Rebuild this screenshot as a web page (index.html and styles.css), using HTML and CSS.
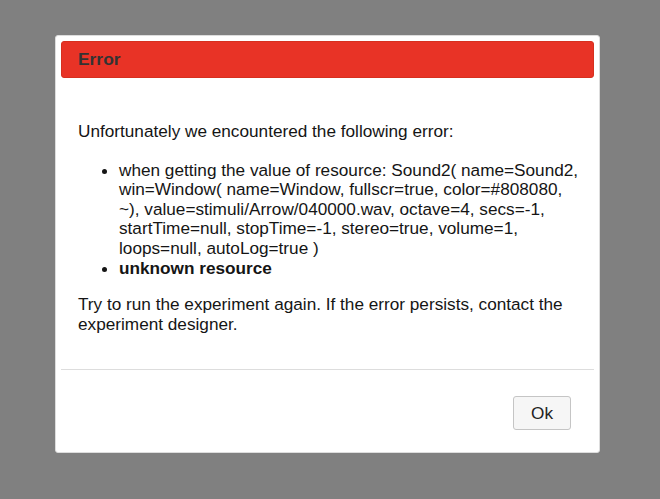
FILE: index.html
```html
<!DOCTYPE html>
<html>
<head>
<meta charset="utf-8">
<link rel="stylesheet" href="styles.css">
</head>
<body>
<div class="dialog">
  <div class="titlebar"><span class="title">Error</span></div>
  <div class="content">
    <p>Unfortunately we encountered the following error:</p>
    <ul>
      <li>when getting the value of resource: Sound2( name=Sound2, win=Window( name=Window, fullscr=true, color=#808080, ~), value=stimuli/Arrow/040000.wav, octave=4, secs=-1, startTime=null, stopTime=-1, stereo=true, volume=1, loops=null, autoLog=true )</li>
      <li><strong>unknown resource</strong></li>
    </ul>
    <p>Try to run the experiment again. If the error persists, contact the experiment designer.</p>
  </div>
  <div class="buttonpane">
    <button class="btn" type="button">Ok</button>
  </div>
</div>
</body>
</html>
```

FILE: styles.css
```css
html, body {
  margin: 0;
  padding: 0;
}
body {
  background: #808080;
  height: 499px;
  overflow: hidden;
  font-family: "Liberation Sans", Arial, sans-serif;
  font-size: 17.2px;
  line-height: 19.6px;
  color: #151515;
  padding-top: 35px;
  box-sizing: border-box;
}
.dialog {
  margin-left: 55px;
  width: 533px;
  padding: 5px;
  background: #fff;
  border: 1px solid #dddddd;
  border-radius: 3px;
}
.titlebar {
  height: 35px;
  display: flex;
  align-items: center;
  padding-left: 16px;
  background: #e83326;
  border: 1px solid #d6301f;
  border-radius: 3px;
}
.title {
  font-weight: bold;
  color: #333;
  font-size: 17.4px;
}
.content {
  padding: 44px 11px 35px 17px;
}
.content p {
  margin: 17px 0;
}
.content p:first-child {
  margin-top: 0;
}
.content p:last-child {
  margin-bottom: 0;
}
.content ul {
  margin: 19px 0 17px;
  padding-left: 41px;
}
.buttonpane {
  border-top: 1px solid #dddddd;
  display: flex;
  justify-content: flex-end;
  padding: 26px 23px 17px 0;
}
.btn {
  width: 58px;
  height: 34px;
  font-family: "Liberation Sans", Arial, sans-serif;
  font-size: 17.2px;
  color: #222;
  background: #f6f6f6;
  border: 1px solid #c5c5c5;
  border-radius: 3px;
  padding: 0;
}
```
